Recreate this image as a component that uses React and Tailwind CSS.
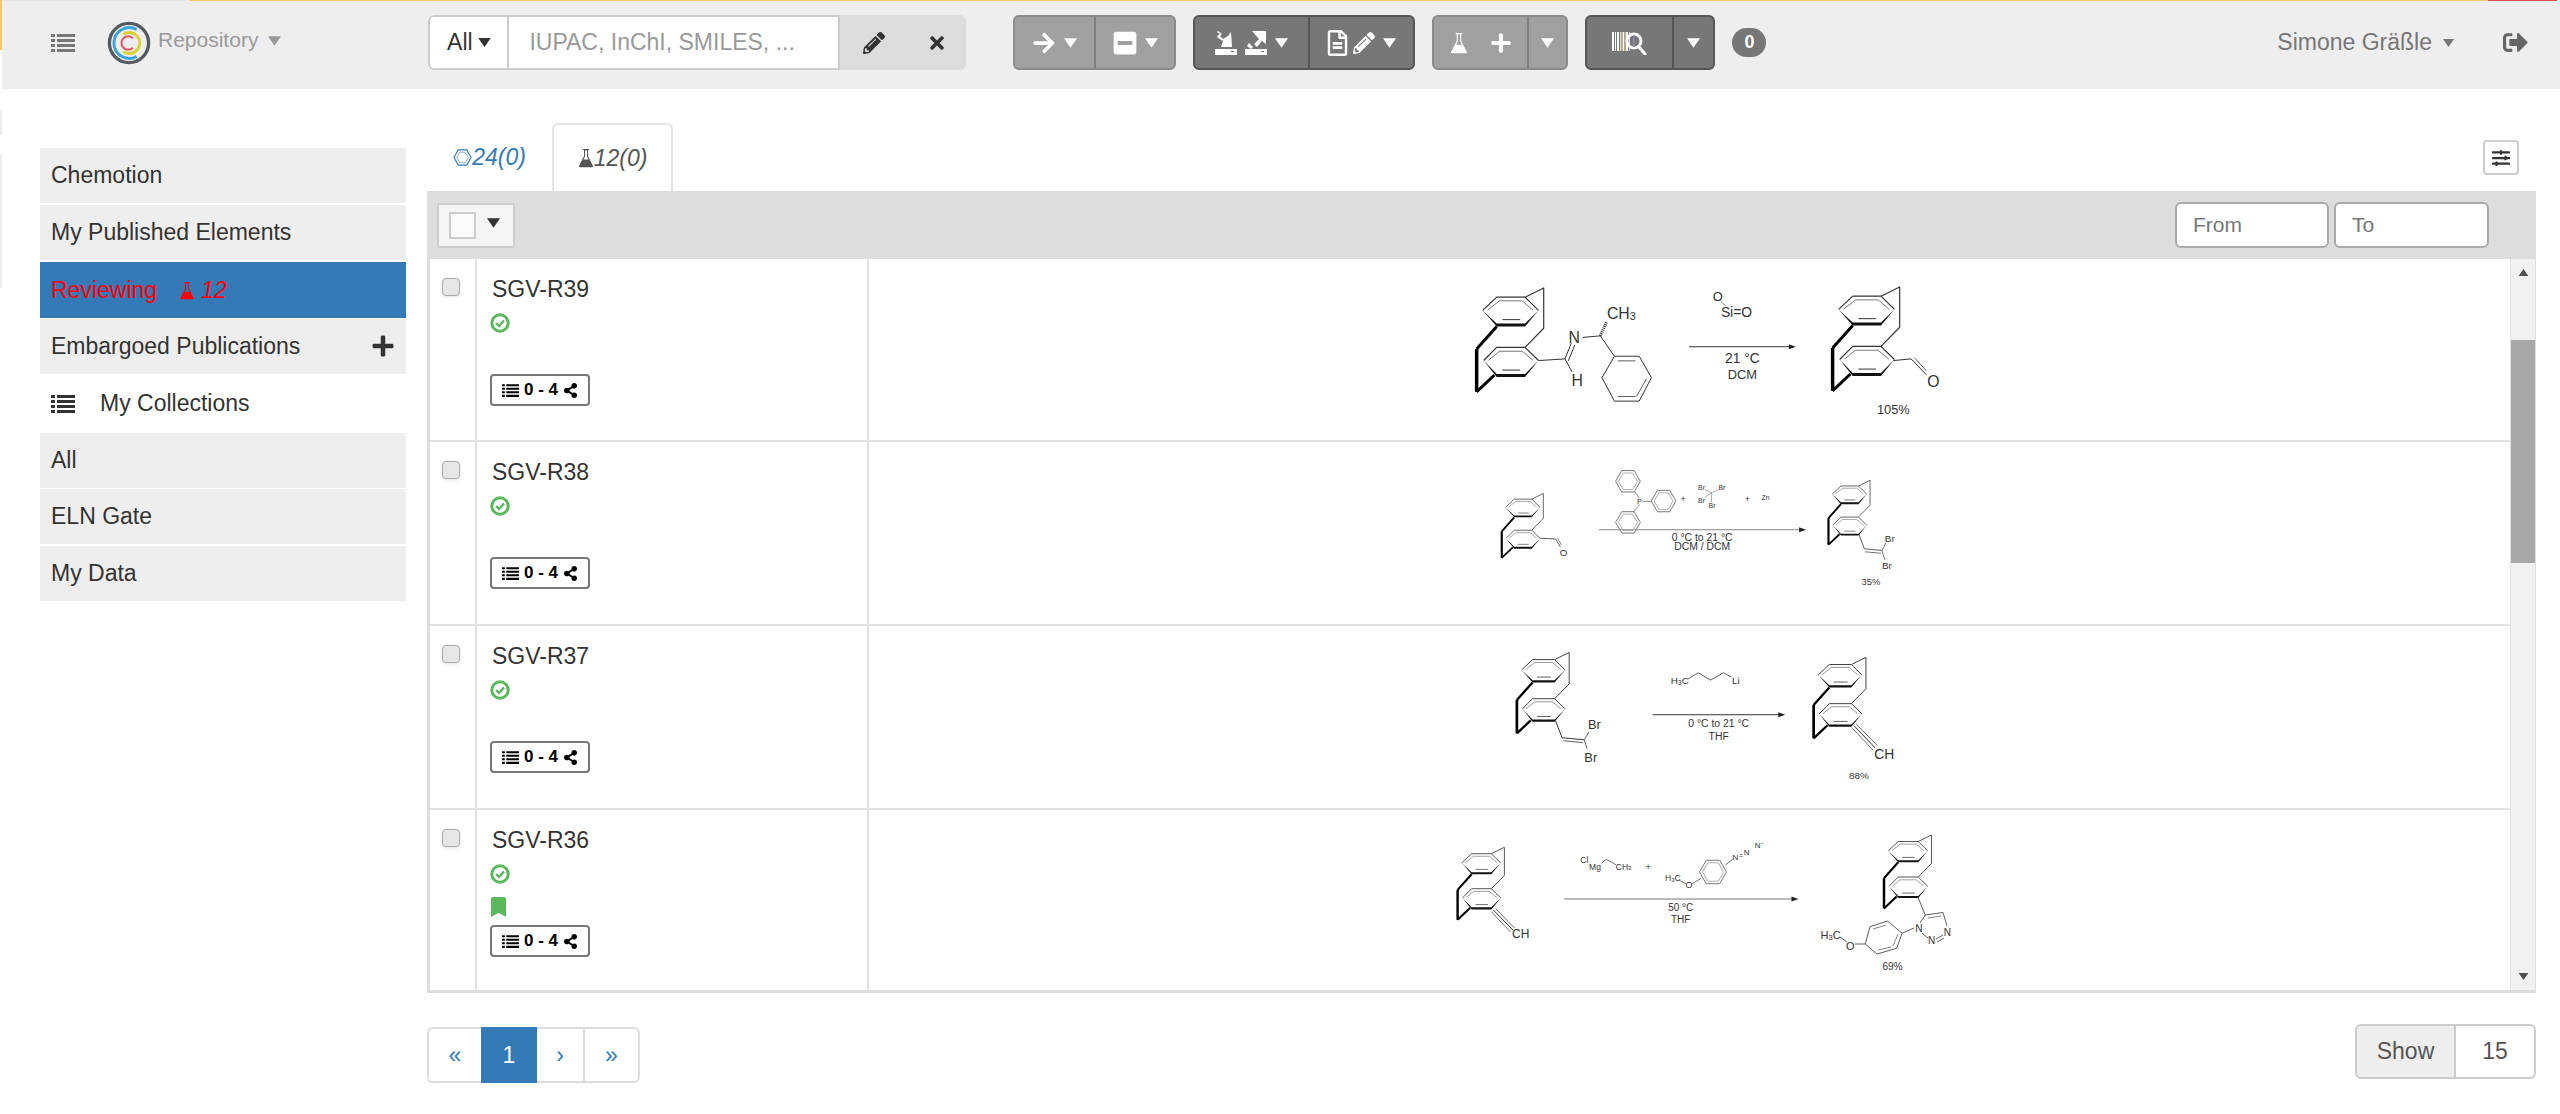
import { FaPencilAlt, FaTimes, FaArrowRight, FaMinusSquare, FaPlus, FaRegFileAlt, FaSignOutAlt, FaBookmark, FaShareAlt, FaSlidersH } from 'react-icons/fa'

const Flask = ({ className }) => (
    <svg viewBox="0 0 16 20" className={className} fill="currentColor">
        <path d="M5 1h6v1h-1v6l5 10c.3.7 0 1.200-.8 1.200H1.800C1 19.200.7 18.700 1 18L6 8V2H5z M7 2.500v6L5.500 11.500h5L9 8.500v-6z" fillRule="evenodd" />
    </svg>
)

const Hexagon = ({ className }) => (
    <svg viewBox="0 0 20 20" className={className} fill="none" stroke="currentColor" strokeWidth="1.200">
        <path d="M5.500 2h9l4.500 8-4.500 8h-9L1 10z" />
        <path d="M7 4.500h6l3 5.500-3 5.500H7L4 10z" strokeWidth="0.600" />
    </svg>
)

const Logo = () => (
    <svg viewBox="0 0 46 46" className="w-[46px] h-[44px]" fill="none">
        <circle cx="23" cy="23" r="20.500" stroke="#555b60" strokeWidth="3.500" />
        <path d="M31 9A16 16 0 1 0 31 37" stroke="#3aa3dc" strokeWidth="3" />
        <path d="M17 14A11 11 0 1 1 17 32" stroke="#d9d32f" strokeWidth="3" />
        <path d="M27 18A7 7 0 1 0 27 28" stroke="#e8585a" strokeWidth="2" />
    </svg>
)

// triangle carets are bigger than the icon font ones
const Tri = ({ className }) => (
    <svg viewBox="0 0 14 10" className={className} fill="currentColor"><path d="M0 0h14L7 10z" /></svg>
)
const Caret = () => <Tri className="w-[13px] h-[10px] text-white" />

const ListIcon = ({ className }) => (
    <svg viewBox="0 0 24 20" className={className} fill="currentColor">
        <path d="M0 1h4v3H0z M6 1h18v3H6z M0 6h4v3H0z M6 6h18v3H6z M0 11h4v3H0z M6 11h18v3H6z M0 16h4v3H0z M6 16h18v3H6z" />
    </svg>
)

const CheckRing = ({ className }) => (
    <svg viewBox="0 0 20 20" className={className} fill="none" stroke="currentColor">
        <circle cx="10" cy="10" r="8.200" strokeWidth="3" />
        <path d="M6 10l3 3 5-5.500" strokeWidth="2.400" />
    </svg>
)

// sample export / import icon
const ExportIcon = ({ flip }) => (
    <svg viewBox="0 0 22 24" className="w-[22px] h-[24px]" fill="white">
        <path d="M0 18h22v6H0z M16 20h3v1h-3z" fillRule="evenodd" />
        {flip
            ? <path d="M7 0h14v13l-4-3-5 6-3-3 5-5z M4 12l4 4-2 2-4-3z" />
            : <path d="M3 0l4 3-2 2 3 3 5-3 3-4 1 15H6l2-6-5-3-1-2 3-2-3-2z" />}
    </svg>
)

const BarcodeSearch = () => (
    <svg viewBox="0 0 36 24" className="w-[36px] h-[24px]">
        <path d="M0 1h2v19H0z M3 1h1v19H3z M5 1h2v19H5z M11 1h1v19h-1z M14 1h2v19h-2z" fill="#fff" />
        <path d="M8 1h1v19H8z M12.500 1h1v19h-1z" fill="#f5d9a0" />
        <path d="M9.500 1h1v19h-1z M17 1h1v19h-1z" fill="#cfe0f5" />
        <circle cx="22" cy="10" r="7" fill="none" stroke="#fff" strokeWidth="3" />
        <rect x="21" y="4" width="1.500" height="12" fill="#88a" />
        <path d="M27 16l6 7" stroke="#fff" strokeWidth="3" strokeLinecap="round" />
    </svg>
)

function BtnGroup({ dark, parts }) {
    const tone = dark ? 'bg-[#777] border-[#555]' : 'bg-[#a0a0a0] border-[#8a8a8a]'
    return (
        <div className={`flex h-[55px] rounded-[6px] border-2 overflow-hidden ${tone}`}>
            {parts.map((p, i) => (
                <div
                    key={i}
                    className={`flex items-center justify-center gap-[8px] ${i > 0 ? (dark ? 'border-l-2 border-[#555]' : 'border-l-2 border-[#7f7f7f]') : ''}`}
                    style={{ width: p.w }}
                >
                    {p.icon}
                </div>
            ))}
        </div>
    )
}

function Navbar() {
    return (
        <div className="flex items-center h-[88px] pb-[5px] ml-[2px] bg-[#eeeeee]">
            <ListIcon className="ml-[49px] w-[24px] h-[20px] text-[#777]" />
            <div className="ml-[31px]"><Logo /></div>
            <span className="ml-[6px] text-[21px] text-[#999] -mt-[6px]">Repository</span>
            <Tri className="ml-[10px] w-[13px] h-[10px] text-[#999] -mt-[4px]" />

            {/* search */}
            <div className="flex h-[55px] ml-[147px] w-[538px] rounded-[6px] overflow-hidden">
                <div className="flex items-center justify-center gap-[5px] w-[81px] bg-white border-2 border-[#ccc] rounded-l-[6px] text-[23px] text-[#333]">
                    All <Tri className="w-[13px] h-[9px]" />
                </div>
                <div className="flex items-center w-[331px] bg-white border-y-2 border-r-2 border-[#ccc] pl-[20px] text-[23px] text-[#999]">
                    IUPAC, InChI, SMILES, ...
                </div>
                <div className="flex items-center flex-1 bg-[#dcdcdc] pl-[23px] gap-[42px] text-[#333]">
                    <FaPencilAlt className="w-[22px] h-[22px]" />
                    <FaTimes className="w-[20px] h-[20px]" />
                </div>
            </div>

            <div className="flex items-center ml-[47px] gap-[17px]">
                <BtnGroup parts={[
                    { w: 79, icon: <><FaArrowRight className="w-[24px] h-[24px] text-white" /><Caret /></> },
                    { w: 80, icon: <><FaMinusSquare className="w-[24px] h-[26px] text-white" /><Caret /></> },
                ]} />
                <BtnGroup dark parts={[
                    { w: 113, icon: <><ExportIcon /><ExportIcon flip /><Caret /></> },
                    { w: 105, icon: <><FaRegFileAlt className="w-[21px] h-[26px] text-white" /><FaPencilAlt className="-ml-[3px] w-[22px] h-[24px] text-white" /><Caret /></> },
                ]} />
                <BtnGroup parts={[
                    { w: 93, icon: <><Flask className="w-[18px] h-[24px] text-white" /><FaPlus className="ml-[14px] w-[22px] h-[22px] text-white" /></> },
                    { w: 39, icon: <Caret /> },
                ]} />
                <BtnGroup dark parts={[
                    { w: 85, icon: <BarcodeSearch /> },
                    { w: 41, icon: <Caret /> },
                ]} />
                <span className="flex items-center justify-center w-[34px] h-[29px] rounded-full bg-[#777] text-white text-[18px] font-bold">0</span>
            </div>

            <span className="ml-auto text-[23px] text-[#777]">Simone Gräßle</span>
            <Tri className="ml-[10px] w-[13px] h-[8px] text-[#777]" />
            <FaSignOutAlt className="ml-[48px] mr-[32px] w-[25px] h-[25px] text-[#666]" />
        </div>
    )
}

function Sidebar() {
    const item = 'flex items-center h-[55px] mb-[2px] px-[11px] bg-[#eeeeee] text-[23px] text-[#333]'
    return (
        <div className="w-[366px] ml-[40px] pt-[59px]">
            <div className={item}>Chemotion</div>
            <div className={item}>My Published Elements</div>
            <div className="flex items-center h-[56px] mb-[1px] px-[11px] bg-[#337ab7] text-[23px] text-[#ff0000]">
                Reviewing
                <Flask className="ml-[22px] w-[16px] h-[19px]" />
                <i className="ml-[6px]">12</i>
            </div>
            <div className={`${item} justify-between !mb-0`}>
                Embargoed Publications
                <FaPlus className="w-[24px] h-[24px] text-[#333] -mt-[2px]" />
            </div>
            <div className="flex items-center h-[59px] px-[11px] text-[23px] text-[#333]">
                <ListIcon className="w-[24px] h-[20px]" />
                <span className="ml-[25px]">My Collections</span>
            </div>
            <div className={`${item} !mb-[1px]`}>All</div>
            <div className={item}>ELN Gate</div>
            <div className={item}>My Data</div>
        </div>
    )
}

/* --- chemistry drawings --- */
const T = ({ x, y, s = 10, c = '#333', children }) => (
    <text x={x} y={y} fontSize={s} fill={c} textAnchor="middle" dominantBaseline="central">{children}</text>
)

const L = ({ p, w = 1, c = '#333' }) => (
    <polyline points={p} fill="none" stroke={c} strokeWidth={w} strokeLinejoin="round" />
)

// the [2.2]paracyclophane core, x/y = left edge / top of the drawing
function Core({ x, y, s = 1 }) {
    return (
        <g transform={`translate(${x} ${y}) scale(${s})`}>
            {/* upper ring */}
            <L p="6.100,22.700 20.300,9.300 48.900,9.300 62.500,22.700" w={1.200} />
            <L p="11,22.500 23,13 46,13 57,22.500" w={0.800} c="#555" />
            <polygon points="6.100,22.700 20.300,39 48.900,39 62.500,22.700 48.900,36 20.300,36" fill="#111" />
            <L p="26,32 44,32" w={1} />
            {/* lower ring */}
            <L p="7.100,73.300 20.300,60 48.900,60 62.500,73.300" w={1.200} />
            <L p="12,73 23,64 46,64 57,73" w={0.800} c="#555" />
            <polygon points="7.100,73.300 20.300,90 48.900,90 62.500,73.300 48.900,87 20.300,87" fill="#111" />
            <L p="26,83 44,83" w={1} />
            {/* bridges */}
            <L p="48.900,9.300 67.800,0 67.800,40.700 48.900,60" w={1.200} />
            <L p="20.300,39 0,61.700" w={3} c="#000" />
            <L p="0,61.700 0,105" w={3.500} c="#000" />
            <L p="0,105 18,88" w={3} c="#000" />
        </g>
    )
}

const Arrow = ({ x1, x2, y, w = 1, c = '#333' }) => (
    <g>
        <line x1={x1} y1={y} x2={x2 - 5} y2={y} stroke={c} strokeWidth={w} />
        <polygon points={`${x2},${y} ${x2 - 7},${y - 2.500} ${x2 - 7},${y + 2.500}`} fill="#222" />
    </g>
)

const Row1 = () => (
    <>
        <Core x={1475.300} y={288.300} />
        <L p="1537.800,361.700 1564.600,360 1571.700,373" />
        <L p="1564.600,360 1571,344" /><L p="1568,362 1574.500,346" />
        <T x={1574} y={338} s={16}>N</T>
        <T x={1577} y={382} s={16}>H</T>
        <L p="1582.400,338.300 1600.300,336.700 1614.600,357.300" />
        <line x1="1600.300" y1="336.700" x2="1607" y2="322" stroke="#333" strokeWidth="3" strokeDasharray="1 1" />
        <text x="1607" y="314" fontSize="16" fill="#333" dominantBaseline="central">CH<tspan fontSize="11" dy="3">3</tspan></text>
        <polygon points="1614.600,357.300 1639.600,357.300 1652,379 1639.600,402.700 1614.600,402.700 1602,379" fill="none" stroke="#333" />
        <L p="1618,362 1636,362" w={0.800} /><L p="1647,380 1637,398" w={0.800} /><L p="1618,398 1636,398" w={0.800} />

        <T x={1719} y={297} s={13}>O</T>
        <L p="1722,302 1727,306" w={0.600} />
        <T x={1738} y={313} s={14}>Si=O</T>
        <Arrow x1={1690} x2={1798} y={347.700} />
        <T x={1744} y={359} s={14}>21 °C</T>
        <T x={1744} y={376} s={13}>DCM</T>

        <Core x={1835.200} y={287.300} />
        <L p="1896.600,361.700 1914.500,360 1930,376" />
        <L p="1918,359 1930,372" w={0.800} />
        <T x={1937} y={383} s={16}>O</T>
        <T x={1896.600} y={410.700} s={13}>105%</T>
    </>
)

const Ph = ({ cx, cy, r = 12.500 }) => {
    const h = r * 0.866
    return (
        <g fill="none" stroke="#777" strokeWidth="1">
            <polygon points={`${cx - r},${cy} ${cx - r / 2},${cy - h} ${cx + r / 2},${cy - h} ${cx + r},${cy} ${cx + r / 2},${cy + h} ${cx - r / 2},${cy + h}`} />
            <polygon points={`${cx - r + 3},${cy} ${cx - r / 2 + 1.500},${cy - h + 2.500} ${cx + r / 2 - 1.500},${cy - h + 2.500} ${cx + r - 3},${cy} ${cx + r / 2 - 1.500},${cy + h - 2.500} ${cx - r / 2 + 1.500},${cy + h - 2.500}`} strokeWidth="0.600" />
        </g>
    )
}

const Row2 = () => (
    <>
        <Core x={1500.700} y={494} s={0.620} />
        <L p="1539.500,539.300 1555,540 1560,548" w={0.800} />
        <L p="1557,539 1561,546" w={0.600} />
        <T x={1563.300} y={553.500} s={10}>O</T>

        <Ph cx={1628.300} cy={481.700} />
        <Ph cx={1664.300} cy={501.700} />
        <Ph cx={1628.300} cy={523.300} />
        <L p="1635,492 1640,499" w={0.800} c="#777" /><L p="1643,502 1652,502" w={0.800} c="#777" /><L p="1640,505 1634,513" w={0.800} c="#777" />
        <T x={1640} y={501.700} s={7.500}>P</T>
        <T x={1684} y={499.300} s={9}>+</T>
        <L p="1706,490 1712.700,493.300 1720,490" w={0.600} c="#777" />
        <L p="1712.700,493.300 1712.700,503" w={0.600} c="#777" />
        <L p="1712.700,493.300 1706,498" w={0.600} c="#777" />
        <T x={1702.700} y={488.300} s={7}>Br</T>
        <T x={1723.300} y={488.300} s={7}>Br</T>
        <T x={1702.700} y={500.700} s={7}>Br</T>
        <T x={1713.300} y={506.700} s={7}>Br</T>
        <T x={1749} y={499.300} s={9}>+</T>
        <T x={1767.300} y={497.700} s={7}>Zn</T>

        <Arrow x1={1599} x2={1808.300} y={530.700} c="#888" />
        <T x={1703.300} y={538.700} s={10.500}>0 °C to 21 °C</T>
        <T x={1703.300} y={548} s={10.500}>DCM / DCM</T>

        <Core x={1831} y={480.700} s={0.620} />
        <L p="1861.700,535 1867.300,550 1885,551.700" w={0.800} />
        <L p="1868,553 1884,554.500" w={0.700} />
        <L p="1885,551.700 1889,544" w={0.700} /><L p="1885,551.700 1888,561" w={0.700} />
        <T x={1893} y={539.300} s={10}>Br</T>
        <T x={1890} y={566.700} s={10}>Br</T>
        <T x={1874} y={582.700} s={9.500}>35%</T>
    </>
)

const Row3 = () => (
    <>
        <Core x={1516} y={652.700} s={0.780} />
        <L p="1555,721.700 1561.700,739 1584,741" />
        <L p="1563,742 1583,744" w={0.800} />
        <L p="1584,741 1589,733" w={0.800} /><L p="1584,741 1587,750" w={0.800} />
        <T x={1594.300} y={726} s={13}>Br</T>
        <T x={1590.700} y={759.300} s={13}>Br</T>

        <text x="1680.700" y="680.700" fontSize="10" fill="#333" textAnchor="middle" dominantBaseline="central">H<tspan fontSize="7" dy="1.500">3</tspan><tspan dy="-1.500">C</tspan></text>
        <L p="1689.300,679.300 1699.300,673.300 1711.700,680.700 1725,673.300 1733,677.700" w={0.800} />
        <T x={1737.300} y={680.700} s={10}>Li</T>
        <Arrow x1={1653.300} x2={1787.300} y={715.700} />
        <T x={1720} y={724.700} s={10.500}>0 °C to 21 °C</T>
        <T x={1720} y={737.700} s={10.500}>THF</T>

        <Core x={1816} y={657.700} s={0.780} />
        <L p="1856.700,726.700 1878.300,749.300" />
        <L p="1859,725 1880.500,747" w={0.700} /><L p="1854.500,728.500 1876,751.500" w={0.700} />
        <T x={1887.500} y={755} s={14}>CH</T>
        <T x={1861.700} y={776.700} s={10}>88%</T>
    </>
)

const Row4 = () => (
    <>
        <Core x={1458.600} y={847.300} s={0.690} />
        <L p="1494.300,910 1513.900,930" />
        <L p="1496.500,908.500 1515.500,928" w={0.700} /><L p="1492,911.500 1511.500,932" w={0.700} />
        <T x={1521.700} y={934.300} s={12}>CH</T>

        <T x={1585.300} y={860} s={8.500}>Cl</T>
        <T x={1596} y={866.700} s={8.500}>Mg</T>
        <L p="1602.400,863.300 1607.400,859.300 1617.400,865" w={0.700} />
        <text x="1624.600" y="866.700" fontSize="8.500" fill="#333" textAnchor="middle" dominantBaseline="central">CH<tspan fontSize="6" dy="1.500">3</tspan></text>
        <T x={1649.200} y={866.700} s={9}>+</T>

        <Ph cx={1714} cy={872} r={13.500} />
        <L p="1726.300,865 1734,859" w={0.700} />
        <T x={1736.300} y={857.700} s={8}>N</T>
        <T x={1742} y={855} s={7}>=</T>
        <T x={1747.700} y={852.300} s={8}>N</T>
        <T x={1760.200} y={845} s={8}>N⁻</T>
        <text x="1673.800" y="878.300" fontSize="8.500" fill="#333" textAnchor="middle" dominantBaseline="central">H<tspan fontSize="6" dy="1.500">3</tspan><tspan dy="-1.500">C</tspan></text>
        <L p="1680,880 1687,884" w={0.700} /><L p="1693,884 1702,878.300" w={0.700} />
        <T x={1690} y={885} s={9}>O</T>

        <Arrow x1={1565} x2={1799.500} y={899} c="#777" />
        <T x={1681.700} y={907.700} s={10}>50 °C</T>
        <T x={1681.700} y={919} s={10}>THF</T>

        <Core x={1885} y={835} s={0.700} />
        <L p="1919,897.300 1926.200,915" w={0.800} />
        <L p="1926.200,915 1944,912.500 1948,926" w={0.800} />
        <L p="1929,918 1942,916" w={0.600} />
        <L p="1926.200,915 1921,923" w={0.800} />
        <L p="1944,935 1937,939" w={0.800} /><L p="1945,938 1938,942" w={0.800} />
        <L p="1929,938 1923,933" w={0.800} />
        <T x={1948.400} y={932.300} s={10}>N</T>
        <T x={1932.600} y={940.700} s={10}>N</T>
        <T x={1919.800} y={928.300} s={10}>N</T>

        <polygon points="1871,926.700 1888.700,921 1903,933.300 1897.700,948.300 1878,954 1866.300,944" fill="none" stroke="#333" strokeWidth="0.800" />
        <L p="1874,929 1887,925" w={0.600} /><L p="1894,946 1899,934" w={0.600} /><L p="1879,950 1892,947" w={0.600} />
        <L p="1903,933.300 1915,928" w={0.800} />
        <text x="1831.600" y="935" fontSize="11" fill="#333" textAnchor="middle" dominantBaseline="central">H<tspan fontSize="8" dy="2">3</tspan><tspan dy="-2">C</tspan></text>
        <L p="1841,937 1848,942" w={0.800} /><L p="1856,944 1866.300,944" w={0.800} />
        <T x={1851.300} y={945.700} s={11}>O</T>
        <T x={1893.400} y={966} s={10}>69%</T>
    </>
)

const rows = [
    { id: 'SGV-R39', top: 259, h: 183, scheme: <Row1 /> },
    { id: 'SGV-R38', top: 442, h: 184, scheme: <Row2 /> },
    { id: 'SGV-R37', top: 626, h: 184, scheme: <Row3 /> },
    { id: 'SGV-R36', top: 810, h: 180, scheme: <Row4 />, bookmark: true, last: true },
]

function Row({ row }) {
    return (
        <div className={`flex ${row.last ? '' : 'border-b-2 border-[#e2e2e2]'}`} style={{ height: row.h }}>
            <div className="w-[47px] shrink-0 pl-[12px] pt-[19px] border-r-2 border-[#e2e2e2]">
                <div className="w-[18px] h-[18px] rounded-[4px] bg-[#e6e6e6] border border-[#aaa] shadow-sm" />
            </div>
            <div className="w-[392px] shrink-0 pl-[13px] pt-[14px] border-r-2 border-[#e2e2e2]">
                <div className="pl-[2px] h-[33px] leading-[33px] text-[23px] text-[#333]">{row.id}</div>
                <CheckRing className="mt-[7px] w-[20px] h-[20px] text-[#5cb85c]" />
                <div className="h-[41px] pt-[13px]">
                    {row.bookmark && <FaBookmark className="w-[17px] h-[20px] text-[#5cb85c]" />}
                </div>
                <div className="flex items-center justify-center gap-[5px] w-[100px] h-[32px] rounded-[4px] border-2 border-[#777] bg-white text-[17px] font-bold text-black">
                    <ListIcon className="w-[17px] h-[15px]" />
                    <span>0 - 4</span>
                    <FaShareAlt className="w-[15px] h-[15px]" />
                </div>
            </div>
            <svg className="flex-1" viewBox={`871 ${row.top} 1639 ${row.h}`}>{row.scheme}</svg>
        </div>
    )
}

function Main() {
    return (
        <div className="ml-[21px] w-[2109px]">
            {/* tabs */}
            <div className="flex justify-between h-[102px] pt-[34px]">
                <div className="flex text-[23px] italic">
                    <div className="flex items-center justify-center w-[125px] text-[#337ab7]">
                        <Hexagon className="w-[19px] h-[19px]" />24(0)
                    </div>
                    <div className="flex items-center justify-center w-[121px] border-x-2 border-t-2 border-[#e5e5e5] rounded-t-[6px] text-[#555]">
                        <Flask className="w-[16px] h-[20px]" />12(0)
                    </div>
                </div>
                <div className="flex items-center justify-center w-[36px] h-[35px] mt-[17px] mr-[17px] rounded-[4px] border-2 border-[#ccc] text-[#333]">
                    <FaSlidersH className="w-[20px] h-[18px]" />
                </div>
            </div>

            {/* toolbar */}
            <div className="flex items-center h-[68px] pl-[10px] pr-[47px] bg-[#dddddd]">
                <div className="flex items-center w-[78px] h-[45px] pl-[10px] rounded-[3px] border-2 border-[#ccc] bg-[#f5f5f5]">
                    <div className="w-[27px] h-[27px] border-2 border-[#ccc] bg-white/60" />
                    <Tri className="ml-[11px] -mt-[4px] w-[13px] h-[10px] text-[#333]" />
                </div>
                <div className="ml-auto flex items-center w-[154px] h-[46px] pl-[16px] rounded-[6px] border-2 border-[#aaa] bg-white text-[21px] text-[#777]">From</div>
                <div className="ml-[5px] flex items-center w-[155px] h-[46px] pl-[16px] rounded-[6px] border-2 border-[#aaa] bg-white text-[21px] text-[#777]">To</div>
            </div>

            {/* table */}
            <div className="flex h-[734px] border-l-[3px] border-b-[3px] border-r border-[#dddddd]">
                <div className="flex-1 min-w-0 overflow-hidden">
                    {rows.map(r => <Row key={r.id} row={r} />)}
                </div>
                <div className="flex flex-col items-center w-[25px] shrink-0 bg-[#f1f1f1] border-l border-[#e2e2e2]">
                    <Tri className="mt-[10px] h-[7px] w-[11px] rotate-180 text-[#505050]" />
                    <div className="mt-[64px] w-full h-[223px] bg-[#a8a8a8]" />
                    <Tri className="mt-auto mb-[10px] h-[7px] w-[11px] text-[#505050]" />
                </div>
            </div>

            {/* pagination */}
            <div className="flex justify-between mt-[31px]">
                <div className="flex h-[56px] mt-[3px] text-[23px] text-[#337ab7]">
                    <div className="flex items-center justify-center w-[54px] border-2 border-r-0 border-[#ddd] rounded-l-[6px]">«</div>
                    <div className="flex items-center justify-center w-[56px] bg-[#337ab7] text-white">1</div>
                    <div className="flex items-center justify-center w-[48px] border-y-2 border-r-2 border-[#ddd]">›</div>
                    <div className="flex items-center justify-center w-[55px] border-y-2 border-r-2 border-[#ddd] rounded-r-[6px]">»</div>
                </div>
                <div className="flex h-[55px] text-[23px] text-[#555]">
                    <div className="flex items-center justify-center w-[101px] bg-[#eeeeee] border-2 border-[#ccc] rounded-l-[6px]">Show</div>
                    <div className="flex items-center justify-center w-[80px] bg-white border-y-2 border-r-2 border-[#ccc] rounded-r-[6px]">15</div>
                </div>
            </div>
        </div>
    )
}

export default function App() {
    return (
        <div className="relative h-[1114px] w-[2560px] overflow-hidden bg-white font-['Liberation_Sans',Arial,sans-serif]">
            {/* stray edges of the window behind */}
            <div className="absolute left-0 top-0 h-[50px] w-[2px] bg-[#f5c76b]" />
            <div className="absolute left-0 top-[110px] h-[25px] w-[2px] bg-[#eeeeee]" />
            <div className="absolute left-0 top-[155px] h-[133px] w-[2px] bg-[#eeeeee]" />

            <div className="flex h-[1px]">
                <div className="w-[190px] bg-[#e6e6e6]" />
                <div className="flex-1 bg-[#f5c76b]" />
                <div className="w-[69px] bg-[#d9534f]" />
                <div className="w-[3px]" />
            </div>
            <Navbar />
            <div className="flex">
                <Sidebar />
                <Main />
            </div>
        </div>
    )
}
